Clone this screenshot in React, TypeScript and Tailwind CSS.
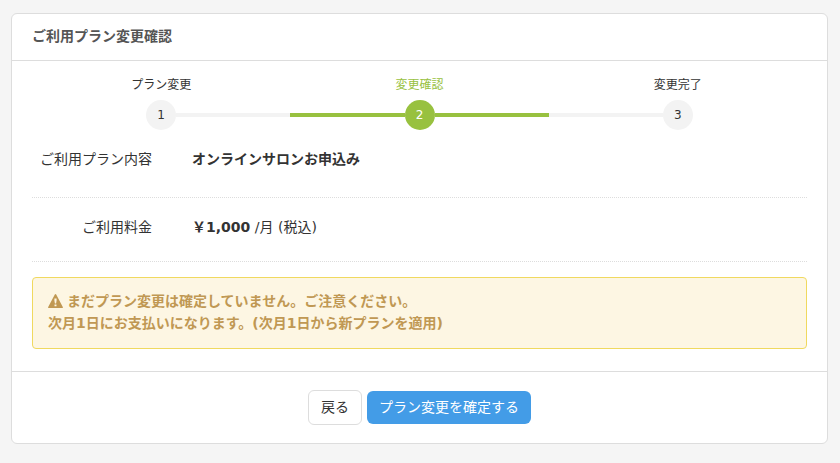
import { clsx } from 'clsx'

interface Step {
    no: number
    label: string
}

const STEPS: Step[] = [
    { no: 1, label: 'プラン変更' },
    { no: 2, label: '変更確認' },
    { no: 3, label: '変更完了' },
]

/** 手続きの進行状況 */
function StepBar({ steps, current }: { steps: Step[]; current: number }) {
    return (
        <ol className="grid grid-cols-3">
            {steps.map(({ no, label }, index) => {
                const active = no === current
                const lineClass = active ? 'bg-[#98c13f]' : 'bg-[#f3f3f3]'
                return (
                    <li
                        key={no}
                        aria-current={active ? 'step' : undefined}
                        className="flex flex-col items-center gap-[5px]"
                    >
                        <span className={clsx('text-xs leading-5', active && 'text-[#98c13f]')}>
                            {label}
                        </span>
                        <div className="flex w-full items-center">
                            <span className={clsx('h-1 flex-1', index > 0 && lineClass)} />
                            <span
                                className={clsx(
                                    'flex size-[30px] items-center justify-center rounded-full text-xs',
                                    active ? 'bg-[#98c13f] text-white' : 'bg-[#f3f3f3]',
                                )}
                            >
                                {no}
                            </span>
                            <span className={clsx('h-1 flex-1', index < steps.length - 1 && lineClass)} />
                        </div>
                    </li>
                )
            })}
        </ol>
    )
}

function WarningIcon() {
    return (
        <svg viewBox="0 0 15 14" fill="currentColor" aria-hidden="true" className="mr-1 inline-block h-3.5 w-[15px] align-[-2px]">
            <path
                fillRule="evenodd"
                d="M7.5 0 Q7.9 0 8.2 .5 L14.8 13 Q15.1 14 14.3 14 H.7 Q-.1 14 .2 13 L6.8 .5 Q7.1 0 7.5 0 Z M6.4 4.5 H8.6 V6.5 L8.1 9.5 H6.9 L6.4 6.5 Z M6.5 10.5 H8.5 V12.3 H6.5 Z"
            />
        </svg>
    )
}

export default function App() {
    return (
        <main className="min-h-screen bg-[#f5f5f5] pt-[13px] pr-3 pb-[19px] pl-[11px] font-['DejaVu_Sans','Noto_Sans_CJK_JP',sans-serif] text-sm text-[#333]">
            <section className="rounded-md border border-[#ddd] bg-white">
                <header className="border-b border-[#ddd] px-5 pt-[11px] pb-[13px]">
                    <h1 className="text-sm leading-[22px] font-bold text-[#555]">ご利用プラン変更確認</h1>
                </header>

                <div className="px-5 pt-3.5 pb-[22px]">
                    <StepBar steps={STEPS} current={2} />

                    <dl className="mb-[15px]">
                        <div className="flex gap-10 border-b border-dotted border-[#ddd] pt-[18px] pb-[27px] leading-[22px]">
                            <dt className="w-[120px] text-right">ご利用プラン内容</dt>
                            <dd className="font-bold">オンラインサロンお申込み</dd>
                        </div>
                        <div className="flex gap-10 border-b border-dotted border-[#ddd] pt-[18px] pb-[23px] leading-[22px]">
                            <dt className="w-[120px] text-right">ご利用料金</dt>
                            <dd>
                                <strong>￥1,000</strong> /月 (税込)
                            </dd>
                        </div>
                    </dl>

                    <div role="alert" className="rounded border border-[#f0d95f] bg-[#fdf6e3] px-[15px] pt-3 pb-3.5 leading-[22px] font-bold text-[#c09853]">
                        <p>
                            <WarningIcon />
                            まだプラン変更は確定していません。ご注意ください。
                        </p>
                        <p>次月1日にお支払いになります。(次月1日から新プランを適用)</p>
                    </div>
                </div>

                <footer className="flex items-center justify-center gap-[5px] border-t border-[#ddd] py-[18px]">
                    <button type="button" className="rounded-md border border-[#ddd] bg-white px-3 py-1.5 leading-[21px]">
                        戻る
                    </button>
                    <button type="button" className="rounded-md bg-[#439ce7] px-3 py-1.5 leading-[21px] text-white">
                        プラン変更を確定する
                    </button>
                </footer>
            </section>
        </main>
    )
}
